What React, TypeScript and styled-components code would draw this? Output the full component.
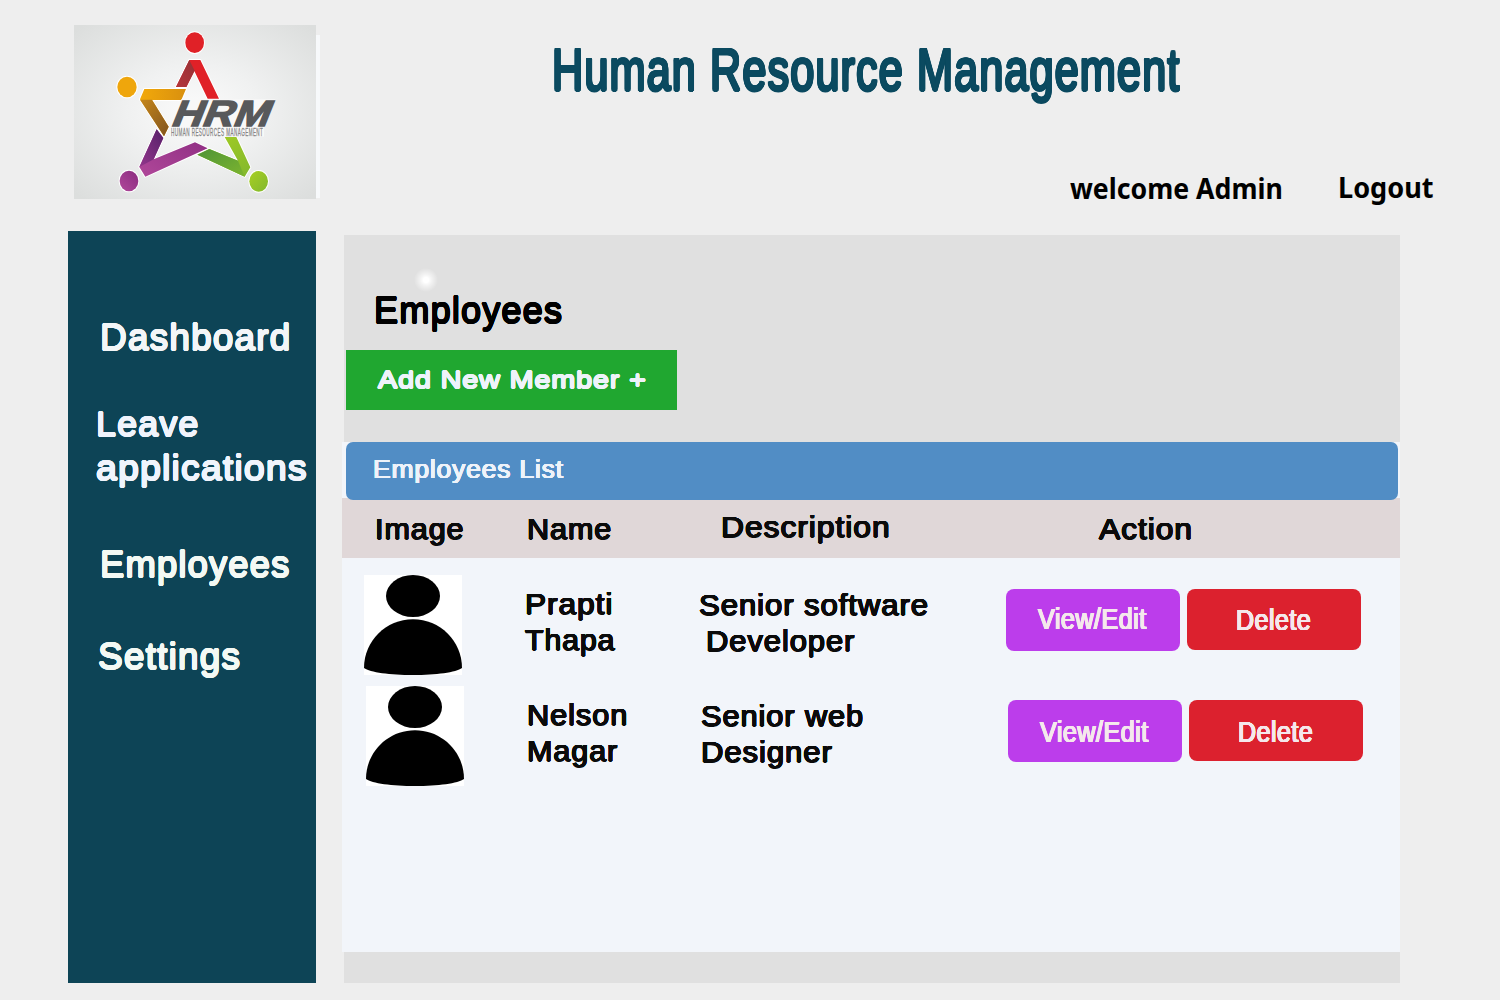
import React from 'react';
import styled, { createGlobalStyle } from 'styled-components';

const GlobalStyle = createGlobalStyle`
  * { box-sizing: border-box; }
  html, body { margin: 0; padding: 0; }
  body {
    background: #eeeeee;
    font-family: "Liberation Sans", Arial, sans-serif;
    overflow: hidden;
  }
`;

const Page = styled.div`
  width: 1500px;
  height: 1000px;
  background: #eeeeee;
  display: flex;
  flex-direction: column;
`;

interface LabelProps {
  $size: number;
  $line: number;
  $wide?: number;
  $stroke?: number;
  $left?: number;
  $track?: number;
}

/* Thickens the glyphs evenly in every direction, which rounds their corners. */
const roundStroke = (width: number) => {
  if (!width) return 'none';
  const r = width / 2;
  return Array.from({ length: 12 }, (_, i) => {
    const a = (i * Math.PI) / 6;
    return `${(Math.cos(a) * r).toFixed(2)}px ${(Math.sin(a) * r).toFixed(2)}px 0 currentColor`;
  }).join(', ');
};

const Label = styled.span<LabelProps>`
  display: block;
  width: max-content;
  white-space: pre;
  font-size: ${(p) => p.$size}px;
  line-height: ${(p) => p.$line}px;
  letter-spacing: ${(p) => p.$track ?? 0.03}em;
  margin-left: ${(p) => p.$left ?? 0}px;
  transform: scaleX(${(p) => (p.$wide ?? 1) / (1 + (p.$track ?? 0.03) * 1.85)});
  transform-origin: 0 0;
  text-shadow: ${(p) => roundStroke(p.$stroke ?? 0)};
`;

const Header = styled.header`
  display: flex;
  height: 231px;
  padding: 25px 0 0 74px;
`;

const LogoFrame = styled.div`
  display: flex;
  width: 246px;
  height: 174px;
`;

const LogoEdge = styled.div`
  width: 4px;
  height: 163px;
  margin-top: 10px;
  background: #f7f9fb;
`;

const HeaderBody = styled.div`
  flex: 1;
  display: flex;
  flex-direction: column;
  padding: 9px 0 0 231px;
`;

const Title = styled.h1`
  margin: 0;
  height: 70px;
  font-weight: 400;
  color: #0b4a60;
`;

const UserBar = styled.div`
  display: grid;
  grid-template-columns: 268px 110px;
  padding: 64px 0 0 519px;
  color: #000;
  font-family: "Noto Sans", "Open Sans", sans-serif;
  font-weight: 700;
`;

const UserItem = styled.div<{ $lift?: number }>`
  margin-top: ${(p) => -(p.$lift ?? 0)}px;
`;

const Columns = styled.div`
  display: flex;
  padding-left: 68px;
`;

const Sidebar = styled.nav`
  width: 248px;
  height: 752px;
  background: #0d4456;
  padding-top: 84.5px;
  display: flex;
  flex-direction: column;
`;

const NavItem = styled.a<{ $gap: number; $tone?: string }>`
  display: block;
  margin-bottom: ${(p) => p.$gap}px;
  color: ${(p) => p.$tone ?? '#f3f9f4'};
`;

const Main = styled.main`
  position: relative;
  width: 1056px;
  height: 748px;
  margin: 4px 0 0 28px;
  background: #e0e0e0;
  padding-top: 54px;
`;

const Glow = styled.div`
  position: absolute;
  left: 70px;
  top: 33px;
  width: 24px;
  height: 24px;
  background: radial-gradient(circle closest-side, #fff 0 22%, rgba(255, 255, 255, 0.6) 48%, rgba(255, 255, 255, 0) 100%);
`;

const Heading = styled.h2`
  margin: 0;
  height: 61px;
  font-weight: 400;
  color: #000;
`;

const AddButton = styled.button`
  display: block;
  width: 331px;
  height: 60px;
  margin-left: 2px;
  padding: 0;
  border: 0;
  background: #20a730;
  color: #eef3fa;
  font-family: inherit;
`;

const Panel = styled.section`
  width: 1058px;
  height: 510px;
  margin: 32px 0 0 -2px;
  background: #f2f5fa;
`;

const PanelTitle = styled.div`
  position: relative;
  width: 1052px;
  height: 58px;
  margin-left: 4px;
  border-radius: 7px;
  background: #518dc5;
  color: #eef3fa;
`;

const HeadRow = styled.div`
  display: grid;
  grid-template-columns: 185px 194.4px 377.3px 1fr;
  height: 60px;
  margin: -2px 0 17px;
  background: #e0d7d8;
  color: #0b0b0b;
`;

const HeadCell = styled.div<{ $lift?: number }>`
  margin-top: ${(p) => -(p.$lift ?? 0)}px;
`;

const Row = styled.div<{ $shift: number }>`
  display: grid;
  grid-template-columns: 161px 173.5px 307.5px auto;
  height: 111px;
  padding-left: ${(p) => 22 + p.$shift}px;
  color: #0b0b0b;
`;

const Cell = styled.div<{ $top: number }>`
  padding-top: ${(p) => p.$top}px;
`;

const Actions = styled.div`
  display: flex;
  align-items: flex-start;
  gap: 7px;
  padding-top: 14px;
`;

const ActionButton = styled.button<{ $danger?: boolean }>`
  display: flex;
  align-items: flex-start;
  width: 174px;
  height: ${(p) => (p.$danger ? 61 : 62)}px;
  padding: 0;
  border: 0;
  border-radius: 8px;
  background: ${(p) => (p.$danger ? '#dc212e' : '#bc3deb')};
  color: #f5e8ec;
  font-family: inherit;
`;

function Logo() {
  return (
    <svg width="242" height="174" viewBox="24 27 726 522" overflow="visible" style={{ display: 'block' }}>
      <defs>
        <radialGradient id="bg" cx="0.5" cy="0.5" r="0.68">
          <stop offset="0" stopColor="#fbfbfb" />
          <stop offset="0.4" stopColor="#f0f1f1" />
          <stop offset="1" stopColor="#dcdedd" />
        </radialGradient>
        <linearGradient id="darkRed" x1="0" y1="1" x2="1" y2="0">
          <stop offset="0" stopColor="#b5373b" />
          <stop offset="1" stopColor="#963035" />
        </linearGradient>
        <linearGradient id="gold" x1="0" y1="0" x2="1" y2="0">
          <stop offset="0" stopColor="#f2a90a" />
          <stop offset="1" stopColor="#d9900f" />
        </linearGradient>
        <linearGradient id="brown" x1="0" y1="0" x2="1" y2="1">
          <stop offset="0" stopColor="#c5861a" />
          <stop offset="1" stopColor="#80531f" />
        </linearGradient>
        <linearGradient id="violet" x1="0" y1="1" x2="1" y2="0">
          <stop offset="0" stopColor="#93368c" />
          <stop offset="1" stopColor="#562069" />
        </linearGradient>
        <linearGradient id="magenta" x1="0" y1="1" x2="1" y2="0">
          <stop offset="0" stopColor="#b0489a" />
          <stop offset="1" stopColor="#8b2b80" />
        </linearGradient>
        <linearGradient id="leaf" x1="0" y1="0" x2="1" y2="1">
          <stop offset="0" stopColor="#4f9437" />
          <stop offset="1" stopColor="#7db52f" />
        </linearGradient>
        <linearGradient id="lime" x1="0" y1="0" x2="1" y2="1">
          <stop offset="0" stopColor="#a8cf22" />
          <stop offset="1" stopColor="#82b82e" />
        </linearGradient>
      </defs>
      <rect x="24" y="27" width="726" height="522" fill="url(#bg)" />
      <g stroke="#fff" strokeWidth="6" paintOrder="stroke" strokeLinejoin="round">
        <ellipse cx="386" cy="80" rx="28" ry="31" fill="#e02127" />
        <ellipse cx="183" cy="213" rx="29" ry="31" fill="#efa60c" />
        <ellipse cx="189" cy="495" rx="28" ry="31" fill="url(#magenta)" />
        <ellipse cx="578" cy="496" rx="28" ry="31" fill="url(#lime)" />
        <polygon points="370,132 403,132 459,248 425,248 385,165 361,213 330,213" fill="#e02127" />
        <polygon points="235,219 360,219 346,252 258,252 308,332 294,361 222,250" fill="url(#gold)" />
        <polygon points="272,340 292,366 263,430 387,379 425,397 238,482 220,453" fill="url(#magenta)" />
        <polygon points="476,363 511,363 553,454 536,482 394,416 430,399 516,434" fill="url(#lime)" />
      </g>
      <polygon points="370,132 386,164 361,213 330,213" fill="url(#darkRed)" />
      <polygon points="222,251 258,251 308,332 294,361" fill="url(#brown)" />
      <polygon points="272,340 292,366 263,430 220,453" fill="url(#violet)" />
      <polygon points="430,399 516,434 536,482 394,416" fill="url(#leaf)" />
      <polygon points="346,250 628,250 594,336 594,362 312,362 312,334" fill="#f8f8f8" />
      <g transform="translate(311 330) skewX(-22)" fill="#58595b" stroke="#58595b" strokeWidth="4">
        <text x="0" y="0" fontFamily="Liberation Sans" fontWeight="700" fontSize="109" textLength="292" lengthAdjust="spacingAndGlyphs">
          HRM
        </text>
      </g>
      <text
        x="315"
        y="359"
        fontFamily="Liberation Sans"
        fontSize="31"
        letterSpacing="3"
        textLength="277"
        lengthAdjust="spacingAndGlyphs"
        fill="#858585"
        stroke="#858585"
        strokeWidth="0.8"
      >
        HUMAN RESOURCES MANAGEMENT
      </text>
    </svg>
  );
}

function Avatar() {
  return (
    <svg width="98" height="100" viewBox="0 0 98 100" style={{ display: 'block' }}>
      <rect width="98" height="100" fill="#fff" />
      <ellipse cx="49" cy="21" rx="27" ry="21" />
      <path d="M0 93 C0 66 22 44.300 49 44.300 C76 44.300 98 66 98 93 C92 97.500 72 100 49 100 C26 100 6 97.500 0 93 Z" />
    </svg>
  );
}

interface Line {
  text: string;
  wide: number;
  left?: number;
}

interface Employee {
  shift: number;
  nameTop: number;
  name: Line[];
  role: Line[];
  viewLine: number;
  deleteLine: number;
}

const employees: Employee[] = [
  {
    shift: 0,
    nameTop: 11.4,
    name: [
      { text: 'Prapti', wide: 1.15, left: 0.4 },
      { text: 'Thapa', wide: 1.1, left: 0.2 },
    ],
    role: [
      { text: 'Senior software', wide: 1.13 },
      { text: 'Developer', wide: 1.124, left: 7 },
    ],
    viewLine: 60,
    deleteLine: 63,
  },
  {
    shift: 2,
    nameTop: 11,
    name: [
      { text: 'Nelson', wide: 1.117, left: 0.4 },
      { text: 'Magar', wide: 1.11, left: 0.4 },
    ],
    role: [
      { text: 'Senior web', wide: 1.118 },
      { text: 'Designer', wide: 1.129 },
    ],
    viewLine: 65,
    deleteLine: 65,
  },
];

function Lines({ items }: { items: Line[] }) {
  return (
    <>
      {items.map((l) => (
        <Label key={l.text} $size={29.2} $line={36} $stroke={1} $wide={l.wide * 0.995} $left={l.left}>
          {l.text}
        </Label>
      ))}
    </>
  );
}

export default function App() {
  return (
    <Page>
      <GlobalStyle />
      <Header>
        <LogoFrame>
          <Logo />
          <LogoEdge />
        </LogoFrame>
        <HeaderBody>
          <Title>
            <Label $size={58.8} $line={72} $stroke={3} $wide={0.77} $left={0.5} $track={0.025}>Human Resource Management</Label>
          </Title>
          <UserBar>
            <UserItem>
              <Label $size={28} $line={40} $wide={0.953} $track={0}>welcome Admin</Label>
            </UserItem>
            <UserItem $lift={1}>
              <Label $size={28} $line={40} $wide={0.968} $track={0}>Logout</Label>
            </UserItem>
          </UserBar>
        </HeaderBody>
      </Header>
      <Columns>
        <Sidebar>
          <NavItem $gap={42} $tone="#f3f6f8">
            <Label $size={36.6} $line={44} $stroke={1.4} $wide={1.07} $left={32}>Dashboard</Label>
          </NavItem>
          <NavItem $gap={53.5} $tone="#f0f4fc">
            <Label $size={35.5} $line={44} $stroke={1.4} $wide={1.07} $left={28.3}>Leave</Label>
            <Label $size={35.5} $line={44} $stroke={1.4} $wide={1.116} $left={28}>applications</Label>
          </NavItem>
          <NavItem $gap={47}>
            <Label $size={36.6} $line={44} $stroke={1.4} $wide={1.053} $left={32}>Employees</Label>
          </NavItem>
          <NavItem $gap={0}>
            <Label $size={36.6} $line={45} $stroke={1.4} $wide={1.072} $left={29.5}>Settings</Label>
          </NavItem>
        </Sidebar>
        <Main>
          <Glow />
          <Heading>
            <Label $size={36} $line={44} $stroke={1.3} $wide={1.063} $left={29.5}>Employees</Label>
          </Heading>
          <AddButton>
            <Label $size={24} $line={60} $stroke={1.3} $wide={1.265} $left={31.5}>Add New Member +</Label>
          </AddButton>
          <Panel>
            <PanelTitle>
              <Label $size={25.9} $line={55} $stroke={0.7} $wide={1.08} $left={27.2}>Employees List</Label>
            </PanelTitle>
            <HeadRow>
              <HeadCell>
                <Label $size={29.2} $line={62} $stroke={1} $wide={1.105} $left={32.8}>Image</Label>
              </HeadCell>
              <HeadCell>
                <Label $size={29.2} $line={62} $stroke={1} $wide={1.105}>Name</Label>
              </HeadCell>
              <HeadCell $lift={2}>
                <Label $size={29.2} $line={62} $stroke={1} $wide={1.15}>Description</Label>
              </HeadCell>
              <HeadCell>
                <Label $size={29.2} $line={62} $stroke={1} $wide={1.148}>Action</Label>
              </HeadCell>
            </HeadRow>
            {employees.map((e) => (
              <Row key={e.shift} $shift={e.shift}>
                <Avatar />
                <Cell $top={e.nameTop}>
                  <Lines items={e.name} />
                </Cell>
                <Cell $top={12}>
                  <Lines items={e.role} />
                </Cell>
                <Actions>
                  <ActionButton>
                    <Label $size={28.7} $line={e.viewLine} $stroke={0.9} $wide={0.907} $left={31.7} $track={0.02}>View/Edit</Label>
                  </ActionButton>
                  <ActionButton $danger>
                    <Label $size={28.7} $line={e.deleteLine} $stroke={0.9} $wide={0.903} $left={49} $track={0.02}>Delete</Label>
                  </ActionButton>
                </Actions>
              </Row>
            ))}
          </Panel>
        </Main>
      </Columns>
    </Page>
  );
}
